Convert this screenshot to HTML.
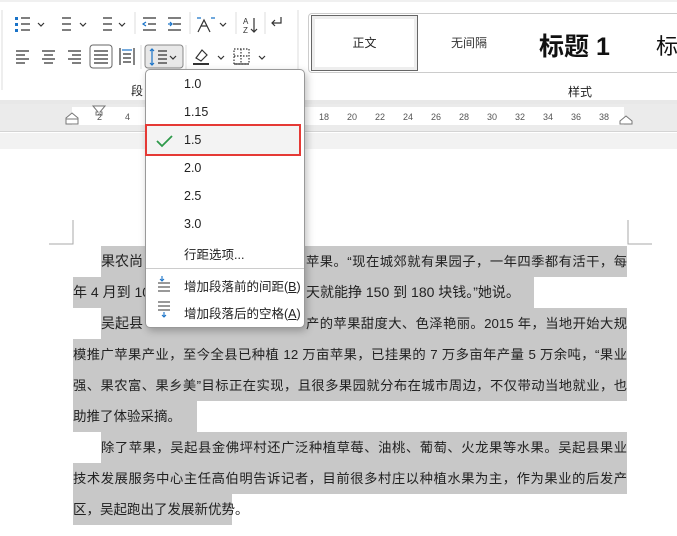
<!DOCTYPE html>
<html><head><meta charset="utf-8"><style>
*{margin:0;padding:0;box-sizing:border-box}
body{width:677px;height:536px;overflow:hidden;background:#fff;font-family:"Liberation Sans","Noto Sans CJK SC",sans-serif;position:relative;color:#222}
.a{position:absolute}
.ln{position:absolute;left:73px;font-size:14px;height:31px;line-height:31px;white-space:nowrap}
.j{text-align:justify;text-align-last:justify;font-size:13.3px}
.hl{background:#c8c8c8}
.mi{position:absolute;left:184px;font-size:12.5px;color:#222}
</style></head><body>
<!-- ribbon -->
<div class="a" style="left:0;top:0;width:677px;height:2px;background:#f0f0f0"></div>
<div class="a" style="left:0;top:100px;width:677px;height:4px;background:#e8e8e8"></div>
<svg class="a" style="left:0;top:0" width="310" height="100">
<g stroke="#333" stroke-width="1.2" fill="none">
<rect x="15" y="17" width="3" height="3" fill="#1a73c8" stroke="none"/><rect x="15" y="23" width="3" height="3" fill="#1a73c8" stroke="none"/><rect x="15" y="29" width="3" height="3" fill="#1a73c8" stroke="none"/>
<path d="M21 18h9M21 24h9M21 30h9"/><path d="M38 23l3 3 3-3"/>
<path d="M62 18h9M62 24h9M62 30h9"/><path d="M80 23l3 3 3-3"/>
<path d="M103 18h9M103 24h9M103 30h9"/><path d="M119 23l3 3 3-3"/>
<path d="M143 18h13M148 24h8M143 30h13" /><path d="M146 22l-3 2 3 2" stroke="#1a73c8"/>
<path d="M168 18h13M173 24h8M168 30h13"/><path d="M168 24h4m-2-2l2 2-2 2" stroke="#1a73c8"/>
<path d="M198 32l6-12 6 12M201 26h6"/><path d="M197 18h4M211 18h4" stroke="#1a73c8"/><path d="M220 23l3 3 3-3"/>
<path d="M254 18v14m-3-3l3 3 3-3"/><path d="M281 17v6h-9m3-3l-3 3 3 3"/>
<path d="M16 51h13M16 55h9M16 59h13M16 63h9"/>
<path d="M42 51h13M44 55h9M42 59h13M44 63h9"/>
<path d="M68 51h13M72 55h9M68 59h13M72 63h9"/>
<path d="M94 51h14M94 55h14M94 59h14M94 63h14"/>
<path d="M120 48v17M134 48v17M123 54h8M123 58h8M123 62h8"/><path d="M122 50h10" stroke="#1a73c8"/>
<path d="M196 58l6-8 5 5-6 6z"/><path d="M193 64h16" stroke-width="2"/><path d="M218 56l3 3 3-3"/>
<path d="M234 49h15v15h-15z" stroke-dasharray="1.5 1.5"/><path d="M234 56h15M241 49v15" stroke-dasharray="1.5 1.5"/><path d="M234 64h15"/><path d="M259 56l3 3 3-3"/>
</g>
<text x="243" y="24" font-size="8" fill="#333">A</text><text x="243" y="33" font-size="8" fill="#333">Z</text>
<rect x="90" y="45" width="22" height="23" rx="3" fill="none" stroke="#666"/>
<rect x="145" y="45" width="38" height="23" rx="3" fill="#e8e8e8" stroke="#888"/>
<path d="M152 49v16M150 51l2-2 2 2M150 63l2 2 2-2" stroke="#1a73c8" fill="none" stroke-width="1.2"/>
<path d="M158 51h9M158 55h9M158 59h9M158 63h9M170 56l3 3 3-3" stroke="#333" fill="none" stroke-width="1.2"/>
<path d="M135 12v22M190 12v22M236 12v22M265 12v22M141 45v24M186 45v24M2 10v80M298 10v80" stroke="#ddd"/>
<text x="131" y="95" font-size="12" fill="#222">段</text>
</svg>
<!-- styles gallery -->
<div class="a" style="left:308px;top:13px;width:380px;height:60px;border:1px solid #ccc;border-radius:4px"></div>
<div class="a" style="left:311px;top:15px;width:107px;height:56px;border:1px solid #666;background:#fff;box-shadow:inset 0 0 0 3px #eee;text-align:center;line-height:54px;font-size:12px">正文</div>
<div class="a" style="left:451px;top:34px;font-size:12px;color:#333">无间隔</div>
<div class="a" style="left:539px;top:27px;font-size:25px;font-weight:bold;color:#111">标题 1</div>
<div class="a" style="left:656px;top:29px;font-size:22px;color:#111">标</div>
<div class="a" style="left:568px;top:83px;font-size:12px">样式</div>
<!-- ruler -->
<div class="a" style="left:0;top:104px;width:677px;height:28px;background:#ebebeb;border-bottom:1px solid #d4d4d4"></div>
<div class="a" style="left:72px;top:107px;width:552px;height:18px;background:#fff"></div>
<div class="a" style="left:0;top:133px;width:677px;height:16px;background:#f2f2f2"></div>
<svg class="a" style="left:0;top:100px" width="677" height="32" font-size="9" fill="#555">
<path d="M93 6h12l-5 6h2v3h-6v-3h2z" fill="#fff" stroke="#777"/>
<path d="M66 24v-6l6-5 6 5v6zM66 19h12" fill="#fff" stroke="#777"/>
<path d="M620 24v-3l6-5 6 5v3z" fill="#fff" stroke="#777"/>
<text x="97" y="20">2</text><text x="125" y="20">4</text>
<text x="319" y="20">18</text><text x="347" y="20">20</text><text x="375" y="20">22</text><text x="403" y="20">24</text><text x="431" y="20">26</text><text x="459" y="20">28</text><text x="487" y="20">30</text><text x="515" y="20">32</text><text x="543" y="20">34</text><text x="571" y="20">36</text><text x="599" y="20">38</text>
</svg>
<!-- page corners -->
<svg class="a" style="left:0;top:220px" width="677" height="30"><path d="M73 0v24H49M628 0v24h24" stroke="#aaa" fill="none"/></svg>
<!-- text -->
<div class="ln hl" style="top:246px;left:101px;width:526px"></div>
<div class="ln" style="top:246px;left:101px">果农尚</div>
<div class="ln j" style="top:246px;left:306px;width:321px">苹果。“现在城郊就有果园子，一年四季都有活干，每</div>
<div class="ln hl" style="top:277px;width:461px"></div>
<div class="ln" style="top:277px">年 4 月到 10</div>
<div class="ln" style="top:277px;left:306px">天就能挣 150 到 180 块钱。”她说。</div>
<div class="ln hl" style="top:308px;left:101px;width:526px"></div>
<div class="ln" style="top:308px;left:101px">吴起县</div>
<div class="ln j" style="top:308px;left:306px;width:321px">产的苹果甜度大、色泽艳丽。2015 年，当地开始大规</div>
<div class="ln hl j" style="top:339px;width:554px">模推广苹果产业，至今全县已种植 12 万亩苹果，已挂果的 7 万多亩年产量 5 万余吨，“果业</div>
<div class="ln hl j" style="top:370px;width:554px">强、果农富、果乡美”目标正在实现，且很多果园就分布在城市周边，不仅带动当地就业，也</div>
<div class="ln hl" style="top:401px;width:124px;font-size:13.5px">助推了体验采摘。</div>
<div class="ln hl j" style="top:432px;left:101px;width:526px">除了苹果，吴起县金佛坪村还广泛种植草莓、油桃、葡萄、火龙果等水果。吴起县果业</div>
<div class="ln hl j" style="top:463px;width:554px">技术发展服务中心主任高伯明告诉记者，目前很多村庄以种植水果为主，作为果业的后发产</div>
<div class="ln hl" style="top:494px;width:159px;font-size:13.5px">区，吴起跑出了发展新优势。</div>
<!-- menu -->
<div class="a" style="left:145px;top:69px;width:160px;height:259px;background:#fff;border:1px solid #999;border-radius:5px;box-shadow:2px 3px 8px rgba(0,0,0,.25)"></div>
<div class="a" style="left:145px;top:124px;width:156px;height:32px;background:#f3f3f3;border:2px solid #e53935"></div>
<svg class="a" style="left:155px;top:133px" width="20" height="16"><path d="M2 8l5 5 10-10" stroke="#2e9a4a" stroke-width="1.8" fill="none"/></svg>
<div class="mi" style="top:77px">1.0</div>
<div class="mi" style="top:105px">1.15</div>
<div class="mi" style="top:133px">1.5</div>
<div class="mi" style="top:161px">2.0</div>
<div class="mi" style="top:189px">2.5</div>
<div class="mi" style="top:217px">3.0</div>
<div class="mi" style="top:244px">行距选项...</div>
<div class="a" style="left:146px;top:268px;width:158px;height:1px;background:#ccc"></div>
<div class="mi" style="top:276px">增加段落前的间距(<u>B</u>)</div>
<div class="mi" style="top:303px">增加段落后的空格(<u>A</u>)</div>
<svg class="a" style="left:156px;top:276px" width="20" height="48" fill="none" stroke-width="1.1">
<path d="M6 0v5M4 3l2 2 2-2" stroke="#1a73c8"/><path d="M2 7h12M2 11h12M2 15h12" stroke="#333"/>
<path d="M2 26h12M2 30h12M2 34h12" stroke="#333"/><path d="M8 36v5M6 39l2 2 2-2" stroke="#1a73c8"/>
</svg>
</body></html>
